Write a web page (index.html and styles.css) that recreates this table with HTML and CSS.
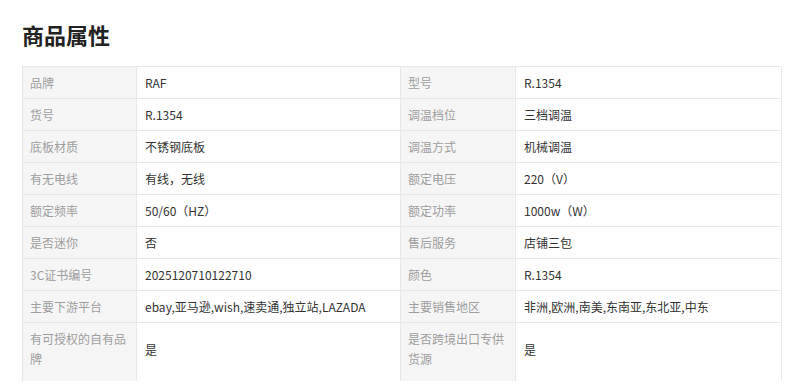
FILE: index.html
```html
<!DOCTYPE html>
<html lang="zh-CN">
<head>
<meta charset="utf-8">
<title>商品属性</title>
<link rel="stylesheet" href="styles.css">
</head>
<body>
<div class="page">
  <h2 class="title">商品属性</h2>
  <div class="clip">
    <table class="attrs">
      <colgroup>
        <col class="c-label"><col class="c-value"><col class="c-label2"><col class="c-value2">
      </colgroup>
      <tr><td class="k">品牌</td><td class="v">RAF</td><td class="k">型号</td><td class="v">R.1354</td></tr>
      <tr><td class="k">货号</td><td class="v">R.1354</td><td class="k">调温档位</td><td class="v">三档调温</td></tr>
      <tr><td class="k">底板材质</td><td class="v">不锈钢底板</td><td class="k">调温方式</td><td class="v">机械调温</td></tr>
      <tr><td class="k">有无电线</td><td class="v">有线，无线</td><td class="k">额定电压</td><td class="v">220（V）</td></tr>
      <tr><td class="k">额定频率</td><td class="v">50/60（HZ）</td><td class="k">额定功率</td><td class="v">1000w（W）</td></tr>
      <tr><td class="k">是否迷你</td><td class="v">否</td><td class="k">售后服务</td><td class="v">店铺三包</td></tr>
      <tr><td class="k">3C证书编号</td><td class="v">2025120710122710</td><td class="k">颜色</td><td class="v">R.1354</td></tr>
      <tr><td class="k">主要下游平台</td><td class="v">ebay,亚马逊,wish,速卖通,独立站,LAZADA</td><td class="k">主要销售地区</td><td class="v">非洲,欧洲,南美,东南亚,东北亚,中东</td></tr>
      <tr class="last"><td class="k">有可授权的自有品牌</td><td class="v">是</td><td class="k">是否跨境出口专供货源</td><td class="v">是</td></tr>
    </table>
  </div>
</div>
</body>
</html>
```

FILE: styles.css
```css
html, body {
  margin: 0;
  padding: 0;
  background: #fff;
}
body {
  font-family: "Microsoft YaHei", "Noto Sans CJK SC", "Noto Sans", sans-serif;
  color: #333;
}
.page {
  padding: 19px 19px 0 22px;
}
.title {
  margin: 0 0 17px;
  font-size: 22px;
  line-height: 30px;
  font-weight: 700;
  color: #222;
}
.clip {
  height: 315px;
  overflow: hidden;
}
.attrs {
  border-collapse: collapse;
  table-layout: fixed;
  width: 759px;
  font-size: 12px;
  line-height: 19px;
}
.c-label { width: 114px; }
.c-value { width: 264px; }
.c-label2 { width: 115px; }
.c-value2 { width: 266px; }
.attrs td {
  border: 1px solid #e8e8e8;
  padding: 6px 7px 6px 8px;
  vertical-align: middle;
}
.attrs .k {
  background: #f5f5f5;
  color: #9e9e9e;
  padding-left: 7px;
}
.attrs .v {
  color: #333;
}
.attrs .last td {
  padding-bottom: 16px;
  border-bottom: none;
}
.attrs .last td.k { line-height: 20px; }
```
